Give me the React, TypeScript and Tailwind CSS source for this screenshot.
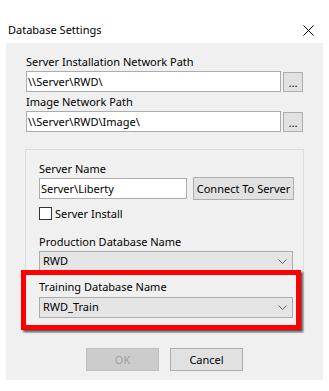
import React from 'react';

function TextBox({ value, width }: { value: string; width: string }) {
  return (
    <div className={`${width} h-[21px] bg-white border border-[#adadad] flex items-center pl-[1px] leading-none whitespace-nowrap`}>
      {value}
    </div>
  );
}

function Combo({ value }: { value: string }) {
  return (
    <div className="w-[254px] h-[21px] bg-[#e5e5e5] border border-[#adadad] flex items-center justify-between pl-[3px] pr-[5px]">
      <span>{value}</span>
      <svg width="9" height="5" viewBox="0 0 9 5" className="text-[#606060]">
        <path d="M0.5 0.5 L4.5 4.5 L8.5 0.5" fill="none" stroke="currentColor" strokeWidth="1" />
      </svg>
    </div>
  );
}

function BrowseButton() {
  return (
    <button className="ml-[2px] mt-[1px] w-[20px] h-[20px] bg-[#e1e1e1] border border-[#adadad] flex items-end justify-center pb-[3px] leading-none">
      ...
    </button>
  );
}

export default function App() {
  return (
    <div className="relative w-[329px] h-[391px] bg-white text-[11px] text-black font-['Noto_Sans',sans-serif] overflow-hidden">
      {/* Title bar */}
      <div className="h-[43px] flex items-start justify-between pl-[8px] pr-[15px] pt-[22px]">
        <span className="leading-[16px]">Database Settings</span>
        <svg width="11" height="11" viewBox="0 0 11 11" className="mt-[3px]">
          <path d="M0.5 0.5 L10.5 10.5 M10.5 0.5 L0.5 10.5" stroke="#000" strokeWidth="1" />
        </svg>
      </div>

      {/* Dialog body */}
      <div className="mx-[6px] h-[337px] bg-[#f0f0f0] pl-[20px] pt-[11px]">
        <div className="leading-[15px]">Server Installation Network Path</div>
        <div className="flex mt-[2px]">
          <TextBox value={'\\\\Server\\RWD\\'} width="w-[255px]" />
          <BrowseButton />
        </div>
        <div className="leading-[15px] mt-[2px]">Image Network Path</div>
        <div className="flex mt-[2px]">
          <TextBox value={'\\\\Server\\RWD\\Image\\'} width="w-[255px]" />
          <BrowseButton />
        </div>

        {/* Group box */}
        <div className="mt-[17px] -ml-[1px] w-[279px] h-[184px] border border-[#dcdcdc] pl-[13px] pt-[11px]">
          <div className="leading-[15px]">Server Name</div>
          <div className="flex mt-[1px]">
            <div className="mt-[1px]">
              <TextBox value={'Server\\Liberty'} width="w-[148px]" />
            </div>
            <button className="ml-[6px] w-[101px] h-[23px] bg-[#e1e1e1] border border-[#adadad] leading-none whitespace-nowrap">
              Connect To Server
            </button>
          </div>
          <div className="flex items-center h-[15px] mt-[6px]">
            <div className="w-[13px] h-[13px] bg-white border border-[#333333]" />
            <span className="ml-[3px] leading-[15px]">Server Install</span>
          </div>
          <div className="leading-[15px] mt-[13px]">Production Database Name</div>
          <div className="mt-[2px]">
            <Combo value="RWD" />
          </div>
          <div className="leading-[15px] mt-[7px]">Training Database Name</div>
          <div className="mt-[3px]">
            <Combo value="RWD_Train" />
          </div>
        </div>

        {/* Buttons */}
        <div className="flex gap-[11px] ml-[60px] mt-[15px]">
          <button className="w-[73px] h-[23px] bg-[#cccccc] border border-[#bfbfbf] text-[#a0a0a0] leading-none">
            OK
          </button>
          <button className="w-[73px] h-[23px] bg-[#e1e1e1] border border-[#adadad] leading-none">
            Cancel
          </button>
        </div>
      </div>

      {/* Red highlight annotation */}
      <div className="absolute left-[21px] top-[270px] w-[280px] h-[60px] border-[5px] border-[#ff0000] shadow-[2px_2px_2px_rgba(0,0,0,0.65)]" />
    </div>
  );
}
